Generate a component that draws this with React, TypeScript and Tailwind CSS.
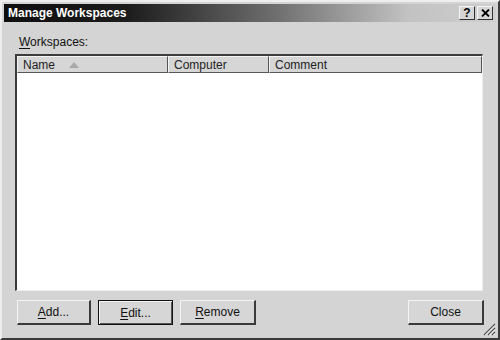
const font = { fontFamily: '"Liberation Sans", Arial, sans-serif' };

function TitleButton({ children }: { children: React.ReactNode }) {
  return (
    <div className="w-[16px] h-[14px] bg-[#d6d6d6] border-t border-l border-[#f4f4f4] border-r border-b border-r-[#303030] border-b-[#303030] flex items-center justify-center">
      {children}
    </div>
  );
}

function Button({ u, rest, isDefault }: { u: string; rest: string; isDefault?: boolean }) {
  return (
    <div
      className={
        'h-[25px] flex items-center justify-center text-[12px] text-[#111] bg-[#d6d6d6] ' +
        (isDefault
          ? 'border border-[#111] shadow-[inset_1px_1px_0_#f4f4f4,inset_-1px_-1px_0_#555]'
          : 'border-t border-l border-[#f4f4f4] border-r-2 border-b-2 border-r-[#3a3a3a] border-b-[#3a3a3a]')
      }
    >
      <span>
        <span className="underline underline-offset-2">{u}</span>
        {rest}
      </span>
    </div>
  );
}

function HeaderCell({ children, w, last }: { children: React.ReactNode; w?: string; last?: boolean }) {
  return (
    <div
      className={
        'h-full flex items-center pl-[5px] bg-[#d6d6d6] border-t border-l border-[#f4f4f4] border-r border-b border-r-[#555] border-b-[#555] ' +
        (last ? 'flex-1' : w)
      }
    >
      {children}
    </div>
  );
}

export default function App() {
  return (
    <div className="w-[500px] h-[340px] bg-[#d4d4d4]" style={font}>
      <div className="w-full h-full flex flex-col border-t-2 border-l-2 border-[#eeeeee] border-r-2 border-b-2 border-r-[#3a3a3a] border-b-[#3a3a3a] p-[2px]">
        {/* title bar */}
        <div className="h-[18px] flex items-center justify-between pl-[4px] pr-[3px] bg-[linear-gradient(to_right,#0e0e0e_0%,#1c1c1c_25%,#6e6e6e_55%,#c2c2c2_82%,#cfcfcf_100%)]">
          <span className="text-white font-bold text-[12px] leading-none">Manage Workspaces</span>
          <div className="flex gap-[2px]">
            <TitleButton>
              <span className="text-[12px] font-bold leading-none text-black">?</span>
            </TitleButton>
            <TitleButton>
              <svg width="9" height="8" viewBox="0 0 9 8">
                <path d="M1 0.5 L8 7.5 M8 0.5 L1 7.5" stroke="#000" strokeWidth="1.8" />
              </svg>
            </TitleButton>
          </div>
        </div>

        {/* body */}
        <div className="flex-1 flex flex-col pl-[11px] pr-[13px] pt-[14px] relative">
          <div className="text-[12px] text-[#111] leading-none pl-[4px] h-[18px]">
            <span className="underline underline-offset-2">W</span>orkspaces:
          </div>

          <div className="h-[237px] bg-white border-t-2 border-l-2 border-[#3c3c3c] border-r border-b border-r-[#eeeeee] border-b-[#eeeeee] flex flex-col">
            <div className="h-[17px] flex text-[12px] text-[#222]">
              <HeaderCell w="w-[151px]">
                <span>Name</span>
                <svg width="10" height="6" viewBox="0 0 10 6" className="ml-[14px]">
                  <path d="M0 6 L5 0 L10 6 Z" fill="#a8a8a8" />
                </svg>
              </HeaderCell>
              <HeaderCell w="w-[101px]">Computer</HeaderCell>
              <HeaderCell last>Comment</HeaderCell>
            </div>
            <div className="flex-1" />
          </div>

          <div className="flex mt-[9px] gap-[7px] pl-[2px]">
            <div className="w-[74px]"><Button u="A" rest="dd..." /></div>
            <div className="w-[75px]"><Button u="E" rest="dit..." isDefault /></div>
            <div className="w-[76px]"><Button u="R" rest="emove" /></div>
            <div className="flex-1" />
            <div className="w-[76px] mr-[-1px]"><Button u="" rest="Close" /></div>
          </div>

          <svg width="13" height="13" viewBox="0 0 13 13" className="absolute right-[0px] bottom-[0px]">
            <path d="M12 1 L1 12 M12 5 L5 12 M12 9 L9 12" stroke="#555" strokeWidth="1.2" />
            <path d="M12 2.5 L2.5 12 M12 6.5 L6.5 12 M12 10.5 L10.5 12" stroke="#fafafa" strokeWidth="0.8" />
          </svg>
        </div>
      </div>
    </div>
  );
}
